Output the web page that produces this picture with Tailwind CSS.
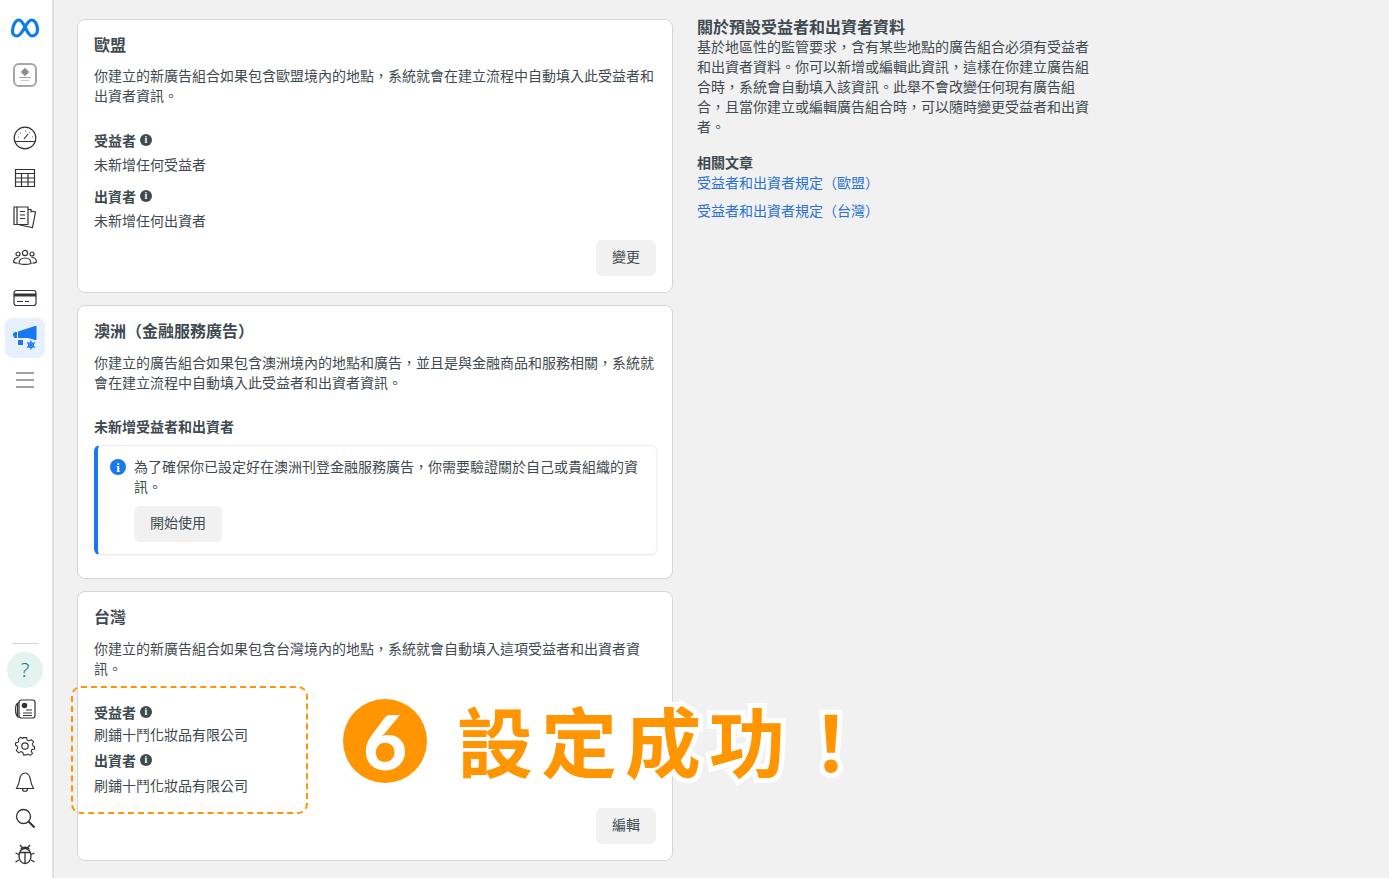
<!DOCTYPE html>
<html lang="zh-Hant">
<head>
    <meta charset="UTF-8">
    <meta name="viewport" content="width=device-width, initial-scale=1.0">
    <title>預設受益者和出資者</title>
    <script src="https://cdn.jsdelivr.net/npm/@tailwindcss/browser@4"></script>
</head>
<body class="bg-[#f1f1f1] font-['Noto_Sans_CJK_TC','Noto_Sans',sans-serif] text-[14px] leading-[20px] text-[#3f4a50]">
<div class="relative flex h-[878px] w-[1389px] overflow-hidden">

    <!-- sidebar -->
    <nav class="flex w-[54px] shrink-0 flex-col items-center border-r-2 border-[#e0e0e0] bg-white pr-[2px]">
        <svg class="mt-[17px] h-[22px] w-[30px]" viewBox="0 0 30 22" fill="none"><path d="M2.500 14.500c0-5 2.500-11.500 6.500-11.500 5.500 0 7.500 16 13 16 3 0 5.500-2.500 5.500-6.500C27.500 8 25 3 21.500 3 16 3 13 19 7 19c-2.800 0-4.500-2-4.500-4.500Z" stroke="#0a7cf0" stroke-width="3.200"/></svg>
        <div class="mt-[24px] flex h-[24px] w-[24px] flex-col items-center justify-center gap-[2px] rounded-[6px] border-2 border-[#aaa5a3] bg-white">
            <div class="h-[6px] w-[6px] rotate-45 bg-[#8a8f92]"></div>
            <div class="h-px w-[12px] bg-[#a5a5a5]"></div>
            <div class="h-px w-[8px] bg-[#d0c8c0]"></div>
        </div>
        <svg class="mt-[39px] h-[24px] w-[24px]" viewBox="0 0 24 24" fill="none" stroke="#333" stroke-width="1.200"><circle cx="12" cy="12" r="10.800"/><path d="M1.500 15.500h21M11 13l4-5" /><path d="M5 11h.5M7.500 7h.5M12 5h.5M16.500 6.500h.5M19 11h.5" stroke-width="1.500"/></svg>
        <svg class="mt-[17px] h-[22px] w-[24px]" viewBox="0 0 24 22" fill="none" stroke="#333" stroke-width="1.200"><path d="M2.500 2.500h19v17h-19zM2.500 6.500h19M2.500 11h19M2.500 15h19M8.500 6.500v13M15 6.500v13"/></svg>
        <svg class="mt-[15px] h-[26px] w-[26px]" viewBox="0 0 26 26" fill="none" stroke="#333" stroke-width="1.200"><path d="M2 3h14v17.500H2zM5 3v17.500M8 7.500h5M8 11h5M8 14.500h5M16 5.500h3v3M19 7l4.500 1-3 15.500-13-2.500"/></svg>
        <svg class="mt-[17px] h-[20px] w-[26px]" viewBox="0 0 26 20" fill="none" stroke="#333" stroke-width="1.200"><circle cx="13" cy="6" r="2.600"/><circle cx="6" cy="7" r="2"/><circle cx="20" cy="7" r="2"/><path d="M7 16.500c0-3.500 2.500-5.500 6-5.500s6 2 6 5.500c-3 1.300-9 1.300-12 0ZM6.500 10.500c-2.800 0-5 1.800-5 4.500.8.800 2.300 1.200 4 1.200M19.500 10.500c2.800 0 5 1.800 5 4.500-.8.800-2.300 1.200-4 1.200"/></svg>
        <svg class="mt-[22px] h-[18px] w-[24px]" viewBox="0 0 24 18" fill="none" stroke="#333" stroke-width="1.200"><rect x="1" y="1.500" width="22" height="15" rx="2.500"/><path d="M1 6h22" stroke-width="3"/><path d="M4 12.500h6M12 12.500h4"/></svg>
        <div class="mt-[11px] flex h-[40px] w-[40px] items-center justify-center rounded-[8px] bg-[#e7f0fd]">
            <svg class="h-[26px] w-[24px]" viewBox="0 0 24 26" fill="#1877f2"><path d="M0 9.500C0 8 1 7 2.500 7H4v6H2.500C1 13 0 11 0 9.500ZM5 6.500 22 1h1.500v14h-2C18 13.500 15 13 13 13H5ZM5 15h5v5H5Z"/><g stroke="#1877f2" stroke-width="1.200" fill="none"><circle cx="18" cy="20" r="2.500"/><path d="M18 15.500v9M14 17.500l8 5M22 17.500l-8 5"/></g></svg>
        </div>
        <svg class="mt-[14px] h-[16px] w-[18px]" viewBox="0 0 18 16" stroke="#444" stroke-width="1.100"><path d="M0 1h18M0 8h18M0 15h18"/></svg>
        <div class="mt-auto h-px w-[26px] bg-[#d5d5d5]"></div>
        <div class="mt-[8px] flex h-[36px] w-[36px] items-center justify-center rounded-full bg-[#e4f3ef] font-['Noto_Sans'] text-[20px] font-light text-[#157a88]">?</div>
        <svg class="mt-[11px] h-[20px] w-[22px]" viewBox="0 0 22 20" fill="none" stroke="#333" stroke-width="1.200"><rect x="5" y="1" width="16" height="18" rx="2.500"/><path d="M5 3.500C3 4 1.500 5 1.500 10s1.500 8 3.500 8.500M3.500 4.500v13M12 11h6M9 14h9M9 16.500h9"/><circle cx="10.500" cy="6.500" r="2.200" fill="#333"/></svg>
        <svg class="mt-[16px] h-[22px] w-[22px]" viewBox="0 0 24 24" fill="none" stroke="#333" stroke-width="1.300"><circle cx="12" cy="12" r="3.500"/><path d="M10 2h4l.6 3 2.400 1 2.600-1.600 2.800 2.800L20.800 9.800l1 2.400 1.700.5v3l-3 .6-1 2.200 1.600 2.700-2.800 2.300-2.600-1.600-2.200 1H10l-.6-3-2.400-1-2.600 1.600-2.800-2.800L3.200 14.200l-1-2.400-1.700-.5v-3l3-.6 1-2.200L3.900 3.800l2.800-2.300 2.600 1.600Z" transform="translate(1.200 1.100) scale(.9)"/></svg>
        <svg class="mt-[14px] h-[24px] w-[20px]" viewBox="0 0 20 24" fill="none" stroke="#333" stroke-width="1.200"><path d="M10 2C6 2 5 5.500 4.500 9c-.4 3-1 5-3 8.500h17c-2-3.500-2.600-5.500-3-8.500C15 5.500 14 2 10 2ZM7.500 18c0 3 5 3 5 0"/></svg>
        <svg class="mt-[13px] h-[20px] w-[20px]" viewBox="0 0 20 20" fill="none" stroke="#333" stroke-width="1.300"><circle cx="8.500" cy="8.500" r="7"/><path d="m13.500 13.500 6 6" stroke-width="2"/></svg>
        <svg class="mb-[13px] mt-[15px] h-[22px] w-[20px]" viewBox="0 0 20 22" fill="none" stroke="#333" stroke-width="1.300"><ellipse cx="10" cy="13" rx="6" ry="7.500"/><path d="M4.500 9.500h11M10 9.500V20.500M6 6.500C6.500 3.500 13.500 3.500 14 6.500M5 2l2.500 3M15 2l-2.500 3M0.500 10l3.500 1.500M19.500 10 16 11.500M0.500 19l3.500-2M19.500 19l-3.500-2"/></svg>
    </nav>

    <!-- main column -->
    <main class="ml-[23px] w-[596px] shrink-0 pt-[19px]">
        <section class="flex h-[274px] flex-col rounded-[8px] border border-[#d6d6d6] bg-white px-[16px] pt-[14px]">
            <h2 class="text-[16px] font-bold">歐盟</h2>
            <p class="mt-[11px]">你建立的新廣告組合如果包含歐盟境內的地點，系統就會在建立流程中自動填入此受益者和出資者資訊。</p>
            <h3 class="mt-[25px] flex items-center gap-[4px] font-bold">受益者 <span class="flex h-[12px] w-[12px] items-center justify-center rounded-full bg-[#3f4a50] font-['Liberation_Serif'] text-[10px] font-bold leading-none text-white">i</span></h3>
            <p class="mt-[4px]">未新增任何受益者</p>
            <h3 class="mt-[12px] flex items-center gap-[4px] font-bold">出資者 <span class="flex h-[12px] w-[12px] items-center justify-center rounded-full bg-[#3f4a50] font-['Liberation_Serif'] text-[10px] font-bold leading-none text-white">i</span></h3>
            <p class="mt-[4px]">未新增任何出資者</p>
            <button class="mt-[10px] h-[36px] w-[60px] self-end rounded-[6px] bg-[#f1f1f1] pb-[4px]">變更</button>
        </section>

        <section class="mt-[12px] h-[274px] rounded-[8px] border border-[#d6d6d6] bg-white px-[16px] pt-[14px]">
            <h2 class="text-[16px] font-bold">澳洲（金融服務廣告）</h2>
            <p class="mt-[12px]">你建立的廣告組合如果包含澳洲境內的地點和廣告，並且是與金融商品和服務相關，系統就會在建立流程中自動填入此受益者和出資者資訊。</p>
            <h3 class="mt-[24px] font-bold">未新增受益者和出資者</h3>
            <div class="mt-[9px] flex h-[110px] w-[563px] gap-[8px] rounded-[6px] border border-l-[4px] border-[#eeeeee] border-l-[#1877f2] bg-white pl-[12px] pr-[12px] pt-[10px] shadow-[0_1px_2px_rgba(0,0,0,0.05)]">
                <span class="mt-[3px] flex h-[16px] w-[16px] shrink-0 items-center justify-center rounded-full bg-[#1877f2] font-['Liberation_Serif'] text-[13px] font-bold leading-none text-white">i</span>
                <div>
                    <p>為了確保你已設定好在澳洲刊登金融服務廣告，你需要驗證關於自己或貴組織的資訊。</p>
                    <button class="mt-[10px] h-[36px] w-[88px] rounded-[6px] bg-[#f1f1f1] pb-[4px]">開始使用</button>
                </div>
            </div>
        </section>

        <section class="mt-[12px] flex h-[270px] flex-col rounded-[8px] border border-[#d6d6d6] bg-white px-[16px] pt-[14px]">
            <h2 class="text-[16px] font-bold">台灣</h2>
            <p class="mt-[12px]">你建立的新廣告組合如果包含台灣境內的地點，系統就會自動填入這項受益者和出資者資訊。</p>
            <h3 class="mt-[24px] flex items-center gap-[4px] font-bold">受益者 <span class="flex h-[12px] w-[12px] items-center justify-center rounded-full bg-[#3f4a50] font-['Liberation_Serif'] text-[10px] font-bold leading-none text-white">i</span></h3>
            <p class="mt-[2px]">刷鋪十鬥化妝品有限公司</p>
            <h3 class="mt-[6px] flex items-center gap-[4px] font-bold">出資者 <span class="flex h-[12px] w-[12px] items-center justify-center rounded-full bg-[#3f4a50] font-['Liberation_Serif'] text-[10px] font-bold leading-none text-white">i</span></h3>
            <p class="mt-[5px]">刷鋪十鬥化妝品有限公司</p>
            <button class="mt-[13px] h-[36px] w-[60px] self-end rounded-[6px] bg-[#f1f1f1] pb-[4px]">編輯</button>
        </section>
    </main>

    <!-- help column -->
    <aside class="ml-[24px] w-[395px] pt-[17px]">
        <h2 class="text-[16px] font-bold leading-[19px]">關於預設受益者和出資者資料</h2>
        <p>基於地區性的監管要求，含有某些地點的廣告組合必須有受益者和出資者資料。你可以新增或編輯此資訊，這樣在你建立廣告組合時，系統會自動填入該資訊。此舉不會改變任何現有廣告組合，且當你建立或編輯廣告組合時，可以隨時變更受益者和出資者。</p>
        <h3 class="mt-[16px] font-bold">相關文章</h3>
        <a class="block text-[#2a71d6]">受益者和出資者規定（歐盟）</a>
        <a class="mt-[8px] block text-[#2a71d6]">受益者和出資者規定（台灣）</a>
    </aside>

    <!-- annotation on top of the screenshot -->
    <div class="absolute left-[71px] top-[686px] h-[128px] w-[237px] rounded-[10px] border-2 border-dashed border-[#ff9500]"></div>
    <div class="absolute left-[343px] top-[699px] flex h-[84px] w-[84px] items-center justify-center rounded-full bg-[#ff9500] font-['Lato'] text-[76px] font-black leading-none text-white">6</div>
    <div class="absolute left-[457px] top-[684px] whitespace-nowrap text-[76px] font-bold leading-[110px] tracking-[8px] text-[#ff9500] [-webkit-text-stroke:10px_white] [paint-order:stroke_fill]">設定成功！</div>
</div>
</body>
</html>
